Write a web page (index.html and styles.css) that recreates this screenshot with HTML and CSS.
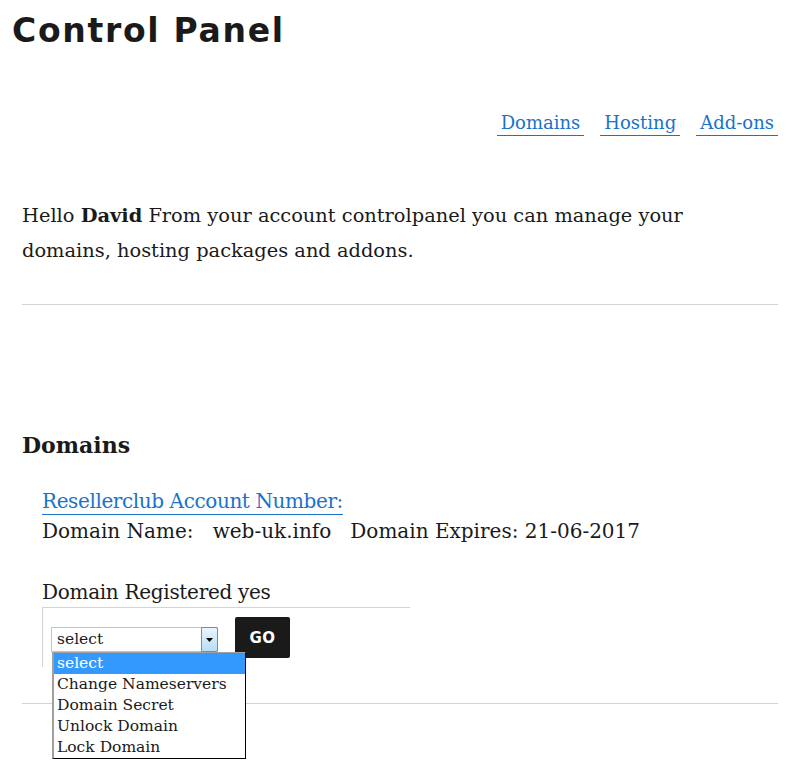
FILE: index.html
```html
<!DOCTYPE html>
<html>
<head>
<meta charset="utf-8">
<link rel="stylesheet" href="styles.css">
</head>
<body>
<h1 class="title">Control Panel</h1>
<div class="page">
  <nav class="nav">
    <a href="#" class="nav-link">Domains</a>
    <a href="#" class="nav-link">Hosting</a>
    <a href="#" class="nav-link">Add-ons</a>
  </nav>
  <p class="intro">Hello <b class="name">David</b> From your account controlpanel you can manage your domains, hosting packages and addons.</p>
  <hr class="rule">
  <h2 class="section-title">Domains</h2>
  <div class="domain">
    <a href="#" class="account-link">Resellerclub Account Number:</a>
    <div class="domain-line">Domain Name:&nbsp;&nbsp; web-uk.info &nbsp; Domain Expires: 21-06-2017</div>
    <div class="registered">Domain Registered yes</div>
    <div class="action-box">
      <div class="select-wrap">
        <div class="fake-select">
          <span class="select-value">select</span>
          <span class="select-btn"><svg width="7" height="4" viewBox="0 0 7 4"><path d="M0 0h7L3.5 4z" fill="#000"/></svg></span>
        </div>
        <ul class="select-list">
          <li class="opt active">select</li>
          <li class="opt">Change Nameservers</li>
          <li class="opt">Domain Secret</li>
          <li class="opt">Unlock Domain</li>
          <li class="opt">Lock Domain</li>
        </ul>
      </div>
      <button class="go">GO</button>
    </div>
  </div>
  <hr class="rule rule-bottom">
</div>
</body>
</html>
```
FILE: styles.css
```css
html, body {
  margin: 0;
  padding: 0;
  background: #fff;
}
body {
  font-family: "DejaVu Serif", "Liberation Serif", serif;
  color: #1a1a1a;
  min-height: 766px;
}
.title {
  font-family: "DejaVu Sans", "Liberation Sans", sans-serif;
  font-weight: bold;
  font-size: 33px;
  letter-spacing: 1.7px;
  line-height: 38px;
  margin: 0;
  padding: 12px 0 0 12px;
  color: #1a1a1a;
}
.page {
  padding: 0 10px 0 22px;
}
.nav {
  display: flex;
  justify-content: flex-end;
  gap: 16px;
  margin-top: 62px;
}
.nav-link {
  font-size: 18px;
  line-height: 22px;
  color: #1a73c8;
  text-decoration: none;
  padding: 0 4px 1px;
  border-bottom: 1px solid #1a73c8;
}
.intro {
  font-size: 19.4px;
  line-height: 35px;
  margin: 62px 0 0;
  max-width: 700px;
}
.name { font-weight: bold; }
.rule {
  border: 0;
  border-top: 1px solid #d4d4d4;
  margin: 36px 0 0;
}
.section-title {
  font-size: 22px;
  font-weight: bold;
  line-height: 30px;
  margin: 125px 0 0;
}
.domain {
  padding-left: 20px;
  margin-top: 26px;
  font-size: 20px;
  line-height: 30px;
}
.account-link {
  color: #1a73c8;
  text-decoration: none;
  border-bottom: 1px solid #1a73c8;
  display: inline-block;
  line-height: 26px;
  letter-spacing: -0.4px;
}
.registered {
  margin-top: 31px;
  line-height: 30px;
  letter-spacing: -0.3px;
}
.action-box {
  width: 368px;
  height: 60px;
  border-top: 1px solid #d4d4d4;
  border-left: 1px solid #d4d4d4;
  box-sizing: border-box;
  display: flex;
  align-items: flex-start;
  padding: 9px 0 0 8px;
  gap: 17px;
}
.select-wrap {
  position: relative;
  margin-top: 10px;
}
.fake-select {
  width: 167px;
  height: 25px;
  box-sizing: border-box;
  border: 1px solid #b4c8dc;
  display: flex;
  align-items: stretch;
  background: #fff;
}
.select-value {
  flex: 1;
  font-size: 15.5px;
  line-height: 23px;
  padding-left: 5px;
}
.select-btn {
  width: 15px;
  background: linear-gradient(#eaf5fd, #b8ddf6);
  border: 1px solid #6d8fb3;
  margin: -1px -1px -1px 0;
  border-radius: 0 2px 2px 0;
  display: flex;
  align-items: center;
  justify-content: center;
}
.select-list {
  position: absolute;
  z-index: 5;
  left: 1px;
  top: 25px;
  width: 194px;
  box-sizing: border-box;
  margin: 0;
  padding: 0;
  list-style: none;
  background: #fff;
  border-top: 1px solid #a0a0a0;
  border-left: 2px solid #a0a0a0;
  border-right: 1px solid #000;
  border-bottom: 1px solid #000;
}
.opt {
  font-size: 15.5px;
  line-height: 21px;
  padding-left: 3px;
  white-space: nowrap;
}
.opt.active {
  background: #3399ff;
  color: #fff;
}
.go {
  width: 55px;
  height: 41px;
  background: #1a1a1a;
  color: #fff;
  border: 0;
  border-radius: 2px;
  font-family: "DejaVu Sans", "Liberation Sans", sans-serif;
  font-weight: bold;
  font-size: 15px;
  letter-spacing: 0.5px;
  padding: 0;
}
.rule-bottom {
  margin-top: 36px;
}
```
